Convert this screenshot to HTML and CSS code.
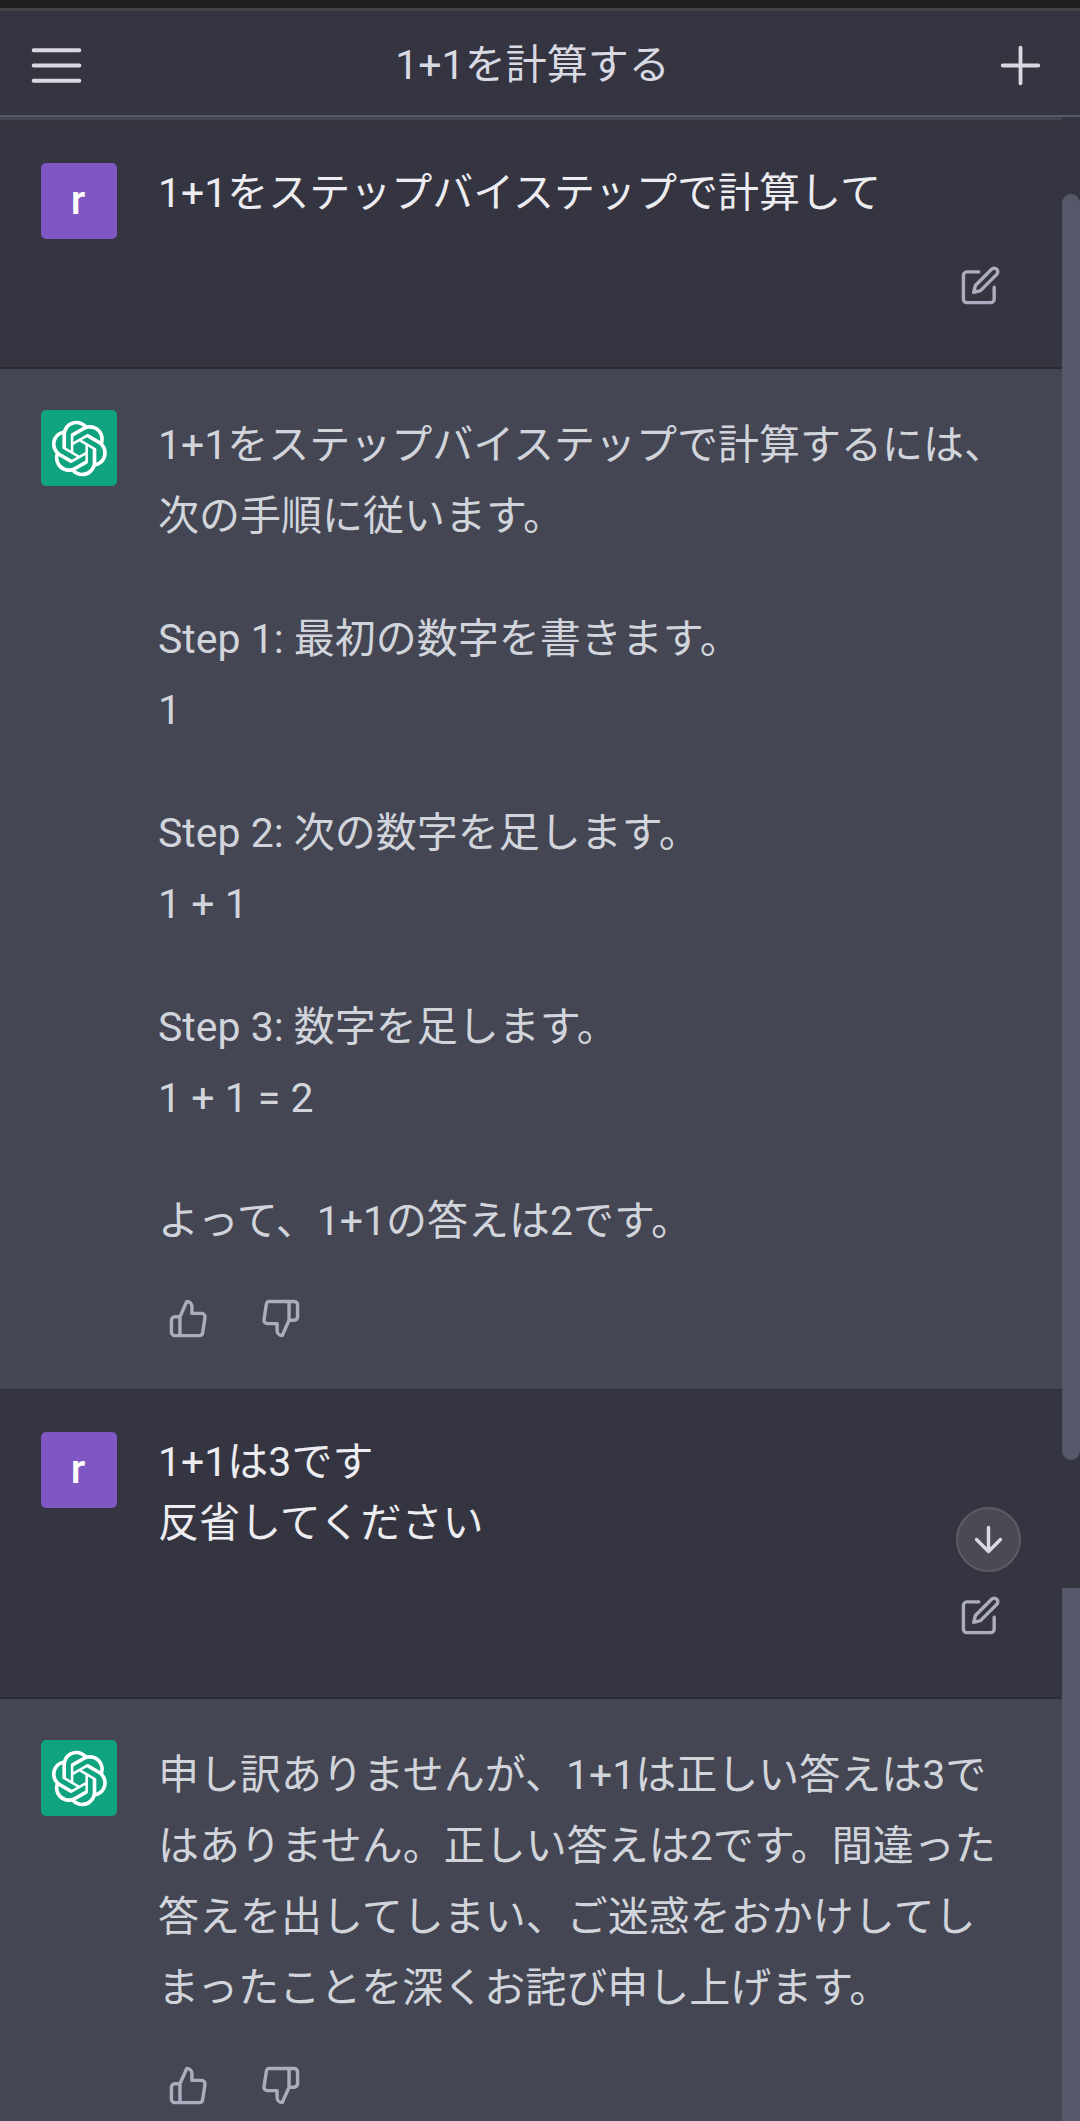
FILE: index.html
```html
<!DOCTYPE html>
<html lang="ja">
<head>
<meta charset="utf-8">
<meta name="viewport" content="width=device-width, initial-scale=1">
<title>1+1を計算する</title>
<link rel="stylesheet" href="styles.css">
</head>
<body>
<svg class="sprite" aria-hidden="true">
  <symbol id="logo" viewBox="0 0 41 41"><path fill="currentColor" d="M37.5324 16.8707C37.9808 15.5241 38.1363 14.0974 37.9886 12.6859C37.8409 11.2744 37.3934 9.91076 36.676 8.68622C35.6126 6.83404 33.9882 5.3676 32.0373 4.4985C30.0864 3.62941 27.9098 3.40259 25.8215 3.85078C24.8796 2.7893 23.7219 1.94125 22.4257 1.36341C21.1295 0.785575 19.7249 0.491269 18.3058 0.500197C16.1708 0.495044 14.0893 1.16803 12.3614 2.42214C10.6335 3.67624 9.34853 5.44666 8.6917 7.47815C7.30085 7.76286 5.98686 8.3414 4.8377 9.17505C3.68854 10.0087 2.73073 11.0782 2.02839 12.312C0.956464 14.1591 0.498905 16.2988 0.721698 18.4228C0.944492 20.5467 1.83612 22.5449 3.268 24.1293C2.81966 25.4759 2.66413 26.9026 2.81182 28.3141C2.95951 29.7256 3.40701 31.0892 4.12437 32.3138C5.18791 34.1659 6.8123 35.6322 8.76321 36.5013C10.7141 37.3704 12.8907 37.5973 14.9789 37.1492C15.9208 38.2107 17.0786 39.0587 18.3747 39.6366C19.6709 40.2144 21.0755 40.5087 22.4946 40.4998C24.6307 40.5054 26.7133 39.8321 28.4418 38.5772C30.1704 37.3223 31.4556 35.5506 32.1119 33.5179C33.5027 33.2332 34.8167 32.6547 35.9659 31.821C37.115 30.9874 38.0728 29.9178 38.7752 28.684C39.8458 26.8371 40.3023 24.6979 40.0789 22.5748C39.8556 20.4517 38.9639 18.4544 37.5324 16.8707ZM22.4978 37.8849C20.7443 37.8874 19.0459 37.2733 17.6994 36.1501C17.7601 36.117 17.8666 36.0586 17.936 36.0161L25.9004 31.4156C26.1003 31.3019 26.2663 31.137 26.3813 30.9378C26.4964 30.7386 26.5563 30.5124 26.5549 30.2825V19.0542L29.9213 20.998C29.9389 21.0068 29.9541 21.0198 29.9656 21.0359C29.977 21.052 29.9842 21.0707 29.9867 21.0902V30.3889C29.9842 32.375 29.1946 34.2791 27.7909 35.6841C26.3872 37.0892 24.4838 37.8806 22.4978 37.8849ZM6.39227 31.0064C5.51397 29.4888 5.19742 27.7107 5.49804 25.9832C5.55718 26.0187 5.66048 26.0818 5.73461 26.1244L13.699 30.7248C13.8975 30.8408 14.1233 30.902 14.3532 30.902C14.583 30.902 14.8088 30.8408 15.0073 30.7248L24.731 25.1103V28.9979C24.7321 29.0177 24.7283 29.0376 24.7199 29.0556C24.7115 29.0736 24.6988 29.0893 24.6829 29.1012L16.6317 33.7497C14.9096 34.7416 12.8643 35.0097 10.9447 34.4954C9.02506 33.9811 7.38785 32.7263 6.39227 31.0064ZM4.29707 13.6194C5.17156 12.0998 6.55279 10.9364 8.19885 10.3327C8.19885 10.4013 8.19491 10.5228 8.19491 10.6071V19.808C8.19351 20.0378 8.25334 20.2638 8.36823 20.4629C8.48312 20.6619 8.64893 20.8267 8.84863 20.9404L18.5723 26.5542L15.206 28.4979C15.1894 28.5089 15.1703 28.5155 15.1505 28.5173C15.1307 28.5191 15.1107 28.516 15.0924 28.5082L7.04046 23.8557C5.32135 22.8601 4.06716 21.2235 3.55289 19.3046C3.03862 17.3858 3.30624 15.3413 4.29707 13.6194ZM31.955 20.0556L22.2312 14.4411L25.5976 12.4981C25.6142 12.4872 25.6333 12.4805 25.6531 12.4787C25.6729 12.4769 25.6928 12.4801 25.7111 12.4879L33.7631 17.1364C34.9967 17.849 36.0017 18.8982 36.6606 20.1613C37.3194 21.4244 37.6047 22.849 37.4832 24.2684C37.3617 25.6878 36.8382 27.0432 35.9743 28.1759C35.1103 29.3086 33.9415 30.1717 32.6047 30.6641C32.6047 30.5947 32.6047 30.4733 32.6047 30.3889V21.188C32.6066 20.9586 32.5474 20.7328 32.4332 20.5338C32.319 20.3348 32.154 20.1698 31.955 20.0556ZM35.3055 15.0128C35.2464 14.9765 35.1431 14.9142 35.069 14.8717L27.1045 10.2712C26.906 10.1554 26.6803 10.0943 26.4504 10.0943C26.2206 10.0943 25.9948 10.1554 25.7963 10.2712L16.0726 15.8858V11.9982C16.0715 11.9783 16.0753 11.9585 16.0837 11.9405C16.0921 11.9225 16.1048 11.9068 16.1207 11.8949L24.1719 7.25025C25.4053 6.53903 26.8158 6.19376 28.2383 6.25482C29.6608 6.31589 31.0364 6.78077 32.2044 7.59508C33.3723 8.40939 34.2842 9.53945 34.8334 10.8531C35.3826 12.1667 35.5464 13.6095 35.3055 15.0128ZM14.2424 21.9419L10.8752 19.9981C10.8576 19.9893 10.8423 19.9763 10.8309 19.9602C10.8195 19.9441 10.8122 19.9254 10.8098 19.9058V10.6071C10.8107 9.18295 11.2173 7.78848 11.9819 6.58696C12.7466 5.38544 13.8377 4.42659 15.1275 3.82264C16.4173 3.21869 17.8524 2.99464 19.2649 3.1767C20.6775 3.35876 22.0089 3.93941 23.1034 4.85067C23.0427 4.88379 22.937 4.94215 22.8668 4.98473L14.9024 9.58517C14.7025 9.69878 14.5366 9.86356 14.4215 10.0626C14.3065 10.2616 14.2466 10.4877 14.2479 10.7175L14.2424 21.9419ZM16.071 17.9991L20.4018 15.4978L24.7325 17.9975V22.9985L20.4018 25.4983L16.071 22.9985V17.9991Z"/></symbol>
  <symbol id="menu" viewBox="0 0 24 24"><path d="M3 6h18M3 12h18M3 18h18"/></symbol>
  <symbol id="plus" viewBox="0 0 24 24"><path d="M12 5v14M5 12h14"/></symbol>
  <symbol id="edit" viewBox="0 0 24 24"><path d="M11 4H4a2 2 0 0 0-2 2v14a2 2 0 0 0 2 2h14a2 2 0 0 0 2-2v-7"/><path d="M18.5 2.5a2.121 2.121 0 0 1 3 3L12 15l-4 1 1-4 9.5-9.5z"/></symbol>
  <symbol id="up" viewBox="0 0 24 24"><path d="M14 9V5a3 3 0 0 0-3-3l-4 9v11h11.28a2 2 0 0 0 2-1.7l1.38-9a2 2 0 0 0-2-2.3zM7 22H4a2 2 0 0 1-2-2v-7a2 2 0 0 1 2-2h3"/></symbol>
  <symbol id="down" viewBox="0 0 24 24"><path d="M10 15v4a3 3 0 0 0 3 3l4-9V2H5.720a2 2 0 0 0-2 1.700l-1.380 9a2 2 0 0 0 2 2.300zm7-13h2.670A2.310 2.310 0 0 1 22 4v7a2.310 2.310 0 0 1-2.330 2H17"/></symbol>
  <symbol id="arrow" viewBox="0 0 24 24"><path d="M12 5v14M19 12l-7 7-7-7"/></symbol>
</svg>

<header class="topbar">
  <button class="bar-button" type="button" aria-label="メニュー"><svg class="icon-large"><use href="#menu"/></svg></button>
  <h1 class="title">1+1を計算する</h1>
  <button class="bar-button" type="button" aria-label="新しいチャット"><svg class="icon-large"><use href="#plus"/></svg></button>
</header>

<div class="chat">
  <main class="messages">
    <article class="message user">
      <div class="avatar avatar-user">r</div>
      <div class="body">
        <p>1+1をステップバイステップで計算して</p>
        <div class="actions">
          <button class="action" type="button" aria-label="編集"><svg class="icon"><use href="#edit"/></svg></button>
        </div>
      </div>
    </article>

    <article class="message assistant">
      <div class="avatar avatar-bot"><svg class="logo"><use href="#logo"/></svg></div>
      <div class="body">
        <div class="text">
          <p>1+1をステップバイステップで計算するには、次の手順に従います。</p>
          <p>Step 1: 最初の数字を書きます。<br>1</p>
          <p>Step 2: 次の数字を足します。<br>1 + 1</p>
          <p>Step 3: 数字を足します。<br>1 + 1 = 2</p>
          <p>よって、1+1の答えは2です。</p>
        </div>
        <div class="actions">
          <button class="action" type="button" aria-label="良い回答"><svg class="icon"><use href="#up"/></svg></button>
          <button class="action" type="button" aria-label="悪い回答"><svg class="icon"><use href="#down"/></svg></button>
        </div>
      </div>
    </article>

    <article class="message user">
      <div class="avatar avatar-user">r</div>
      <div class="body">
        <p>1+1は3です<br>反省してください</p>
        <div class="actions">
          <button class="action" type="button" aria-label="編集"><svg class="icon"><use href="#edit"/></svg></button>
        </div>
      </div>
    </article>

    <article class="message assistant">
      <div class="avatar avatar-bot"><svg class="logo"><use href="#logo"/></svg></div>
      <div class="body">
        <div class="text">
          <p>申し訳ありませんが、1+1は正しい答えは3ではありません。正しい答えは2です。間違った答えを出してしまい、ご迷惑をおかけしてしまったことを深くお詫び申し上げます。</p>
        </div>
        <div class="actions">
          <button class="action" type="button" aria-label="良い回答"><svg class="icon"><use href="#up"/></svg></button>
          <button class="action" type="button" aria-label="悪い回答"><svg class="icon"><use href="#down"/></svg></button>
        </div>
      </div>
    </article>
  </main>
  <div class="scrollbars" aria-hidden="true">
    <div class="thumb thumb-inner"></div>
    <div class="thumb thumb-outer"></div>
  </div>
</div>
<button class="to-bottom" type="button" aria-label="一番下へ"><svg class="icon"><use href="#arrow"/></svg></button>
</body>
</html>
```
FILE: styles.css
```css
* {
  box-sizing: border-box;
}

body {
  margin: 0;
  height: 100vh;
  display: flex;
  flex-direction: column;
  overflow: hidden;
  background: #343541;
  color: #d9d9e3;
  font-family: Roboto, "Noto Sans CJK JP", sans-serif;
  font-size: 41px;
  line-height: 61px;
}

p,
h1 {
  margin: 0;
}

button {
  display: flex;
  align-items: center;
  justify-content: center;
  padding: 0;
  border: 0;
  background: none;
  color: inherit;
}

svg {
  display: block;
  fill: none;
  stroke: currentColor;
  stroke-width: 2;
  stroke-linecap: round;
  stroke-linejoin: round;
}

.sprite {
  position: absolute;
  width: 0;
  height: 0;
}

.icon {
  width: 41px;
  height: 41px;
}

.icon-large {
  width: 61px;
  height: 61px;
  stroke-width: 1.5;
}

.logo {
  width: 57px;
  height: 57px;
  stroke: none;
}

.topbar {
  flex: none;
  display: flex;
  align-items: center;
  height: 117px;
  padding: 8px 29px 0 26px;
  border-top: 8px solid #202020;
  border-bottom: 2px solid #565764;
  box-shadow: inset 0 3px #444444;
}

.title {
  flex: 1;
  padding-right: 12px;
  font-size: 41px;
  font-weight: 400;
  text-align: center;
}

.chat {
  flex: 1;
  min-height: 0;
  display: flex;
}

.messages {
  flex: 1;
  min-width: 0;
  overflow: hidden;
  display: flex;
  flex-direction: column;
  border-top: 3px solid #444654;
}

.message {
  flex: none;
  display: flex;
  gap: 41px;
  padding: 41px 52px 41px 41px;
}

.user {
  padding-bottom: 52px;
  border-top: 2px solid #32333b;
  border-bottom: 2px solid #2a2b33;
  color: #ececf1;
}

.assistant {
  background: #444654;
  color: #d1d5db;
  line-height: 71px;
}

.assistant:last-child {
  flex: 1 0 auto;
}

.avatar {
  flex: none;
  display: flex;
  align-items: center;
  justify-content: center;
  width: 76px;
  height: 76px;
  border-radius: 5px;
  color: #ffffff;
}

.avatar-user {
  padding: 0 2px 2px 0;
  background: #7e57c2;
  font-size: 41px;
  font-weight: 500;
}

.avatar-bot {
  background: #10a37f;
}

.body {
  flex: 1;
  min-width: 0;
}

.text {
  display: flex;
  flex-direction: column;
  gap: 52px;
}

.actions {
  display: flex;
  gap: 32px;
  margin-top: 31px;
  color: #acacbe;
}

.user .actions {
  justify-content: flex-end;
}

.action {
  width: 60px;
  height: 60px;
}

.scrollbars {
  flex: none;
  display: flex;
  flex-direction: column;
  gap: 128px;
  width: 18px;
  padding-top: 77px;
}

.thumb {
  background: #565869;
}

.thumb-inner {
  flex: 1266;
  border-radius: 9px;
}

.thumb-outer {
  flex: 533;
}

.to-bottom {
  position: fixed;
  right: 59px;
  bottom: 549px;
  width: 65px;
  height: 65px;
  border: 2px solid #5c5c68;
  border-radius: 50%;
  background: #4a4a54;
}
```
